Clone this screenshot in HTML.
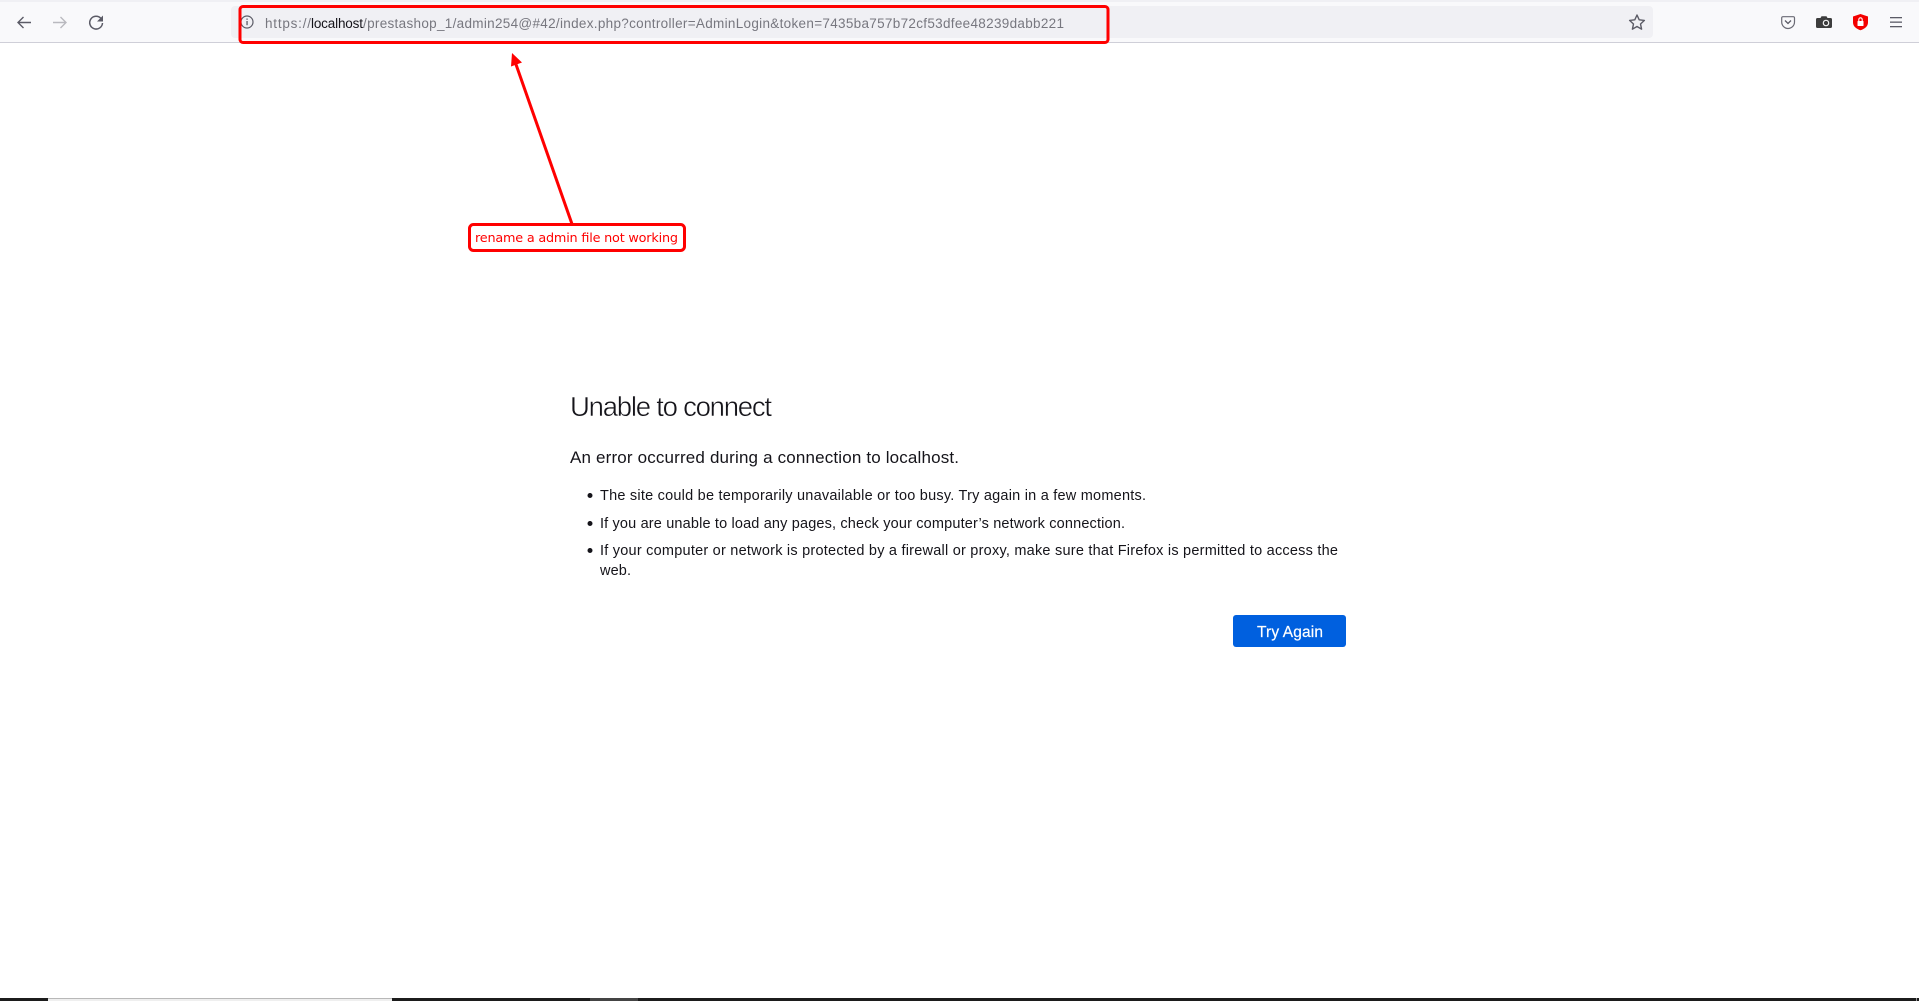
<!DOCTYPE html>
<html lang="en">
<head>
<meta charset="utf-8">
<title>Problem loading page</title>
<style>
html,body{margin:0;padding:0;background:#fff;width:1919px;height:1001px;overflow:hidden}
svg{position:absolute;left:0;top:0;display:block}
</style>
</head>
<body>
<svg width="1919" height="1001" viewBox="0 0 1919 1001" xmlns="http://www.w3.org/2000/svg" font-family="'Liberation Sans',sans-serif">
  <!-- browser toolbar -->
  <rect x="0" y="0" width="1919" height="2" fill="#f0f0f4"/>
  <rect x="0" y="2" width="1919" height="40" fill="#f9f9fb"/>
  <rect x="0" y="42" width="1919" height="1" fill="#cfcfd8"/>
  <rect x="231" y="6" width="1422" height="32" rx="4" fill="#f0f0f4"/>

  <!-- nav icons -->
  <path d="M31 22.5H18M23.5 17L18 22.5L23.5 28" fill="none" stroke="#5b5b66" stroke-width="1.4"/>
  <path d="M53 22.5H66M60.500 17L66 22.5L60.500 28" fill="none" stroke="#b9b9bf" stroke-width="1.4"/>
  <path d="M101 18.500A6.400 6.400 0 1 0 102.500 23" fill="none" stroke="#5b5b66" stroke-width="1.500"/>
  <path d="M103 15.500V21.500H97Z" fill="#5b5b66"/>

  <!-- info -->
  <circle cx="247" cy="22" r="6" fill="none" stroke="#5b5b66" stroke-width="1.200"/>
  <rect x="246.400" y="21" width="1.300" height="4.200" fill="#5b5b66"/>
  <rect x="246.400" y="18.500" width="1.300" height="1.300" fill="#5b5b66"/>

  <!-- url -->
  <text x="265" y="28" font-size="13.500" fill="#77777f" textLength="46" lengthAdjust="spacing">https://</text>
  <text x="311" y="28" font-size="13.500" fill="#15141a" textLength="52" lengthAdjust="spacing">localhost</text>
  <text x="363" y="28" font-size="13.500" fill="#77777f" textLength="701" lengthAdjust="spacing">/prestashop_1/admin254@#42/index.php?controller=AdminLogin&amp;token=7435ba757b72cf53dfee48239dabb221</text>

  <!-- star -->
  <path d="M1637 15L1639.200 19.800L1644.400 20.400L1640.500 24L1641.600 29.200L1637 26.500L1632.400 29.200L1633.500 24L1629.600 20.400L1634.800 19.800Z" fill="none" stroke="#5b5b66" stroke-width="1.400" stroke-linejoin="round"/>

  <!-- pocket -->
  <path d="M1783 16.700H1793.200A1.300 1.300 0 0 1 1794.500 18V22A6.500 6.500 0 0 1 1788 28.500A6.500 6.500 0 0 1 1781.700 22V18A1.300 1.300 0 0 1 1783 16.700Z" fill="none" stroke="#6b6b75" stroke-width="1.200"/>
  <path d="M1785 20.500L1788 23.500L1791 20.500" fill="none" stroke="#5b5b66" stroke-width="1.300"/>

  <!-- camera -->
  <path d="M1817.500 18H1820.500L1821.500 16.200H1826.500L1827.500 18H1830.500A1.500 1.500 0 0 1 1832 19.500V26.500A1.500 1.500 0 0 1 1830.500 28H1817.500A1.500 1.500 0 0 1 1816 26.500V19.500A1.500 1.500 0 0 1 1817.500 18Z" fill="#3d3d3d"/>
  <circle cx="1826" cy="23" r="2.700" fill="none" stroke="#f3f3f3" stroke-width="1.200"/>

  <!-- shield -->
  <path d="M1860.500 14L1868 16.500V22.500C1868 26.500 1864.500 29 1860.500 30.200C1856.500 29 1853 26.500 1853 22.500V16.500Z" fill="#f40000"/>
  <rect x="1857.500" y="21" width="6" height="5" rx=".5" fill="#fff"/>
  <path d="M1858.800 21V19.500A1.700 1.700 0 0 1 1862.200 19.500V21" fill="none" stroke="#fff" stroke-width="1.100"/>

  <!-- menu -->
  <rect x="1890" y="17" width="12" height="1.300" fill="#5b5b66"/>
  <rect x="1890" y="21.500" width="12" height="1.300" fill="#5b5b66"/>
  <rect x="1890" y="26" width="12" height="1.300" fill="#5b5b66"/>

  <!-- annotation: url box -->
  <rect x="240" y="6.500" width="868" height="36" rx="3" fill="none" stroke="#f00" stroke-width="3"/>

  <!-- annotation: arrow -->
  <path d="M572 224L515.500 63" fill="none" stroke="#f00" stroke-width="3"/>
  <path d="M512 53L522 62.500L511 66.500Z" fill="#f00"/>

  <!-- annotation: label -->
  <rect x="469.500" y="224.500" width="215" height="26" rx="4" fill="#fff" stroke="#f00" stroke-width="3"/>
  <text x="475" y="242" font-family="'DejaVu Sans',sans-serif" font-size="12.800" fill="#f00" textLength="203" lengthAdjust="spacing">rename a admin file not working</text>

  <!-- error page -->
  <text x="570" y="416" font-size="27.500" fill="#15141a" stroke="#fff" stroke-width=".45" textLength="202" lengthAdjust="spacing">Unable to connect</text>
  <text x="570" y="463" font-size="17" fill="#15141a" textLength="389" lengthAdjust="spacing">An error occurred during a connection to localhost.</text>

  <circle cx="590" cy="495.500" r="2.500" fill="#15141a"/>
  <text x="600" y="500" font-size="14.500" fill="#15141a" textLength="546" lengthAdjust="spacing">The site could be temporarily unavailable or too busy. Try again in a few moments.</text>
  <circle cx="590" cy="523.500" r="2.500" fill="#15141a"/>
  <text x="600" y="528" font-size="14.500" fill="#15141a" textLength="525" lengthAdjust="spacing">If you are unable to load any pages, check your computer’s network connection.</text>
  <circle cx="590" cy="550.500" r="2.500" fill="#15141a"/>
  <text x="600" y="555" font-size="14.500" fill="#15141a" textLength="738" lengthAdjust="spacing">If your computer or network is protected by a firewall or proxy, make sure that Firefox is permitted to access the</text>
  <text x="600" y="575" font-size="14.500" fill="#15141a" textLength="31" lengthAdjust="spacing">web.</text>

  <rect x="1233" y="615" width="113" height="32" rx="3" fill="#0060df"/>
  <text x="1257" y="637" font-size="15.500" fill="#fff" textLength="66" lengthAdjust="spacing" stroke="#fff" stroke-width=".2">Try Again</text>

  <!-- taskbar sliver -->
  <rect x="0" y="998" width="1919" height="3" fill="#1c1c1c"/>
  <rect x="48" y="998" width="344" height="3" fill="#efefef"/>
  <rect x="48" y="998" width="344" height="1" fill="#b8b8b8"/>
  <rect x="590" y="998" width="48" height="3" fill="#444"/>
  <rect x="1916" y="998" width="1" height="3" fill="#999"/>
</svg>
</body>
</html>
